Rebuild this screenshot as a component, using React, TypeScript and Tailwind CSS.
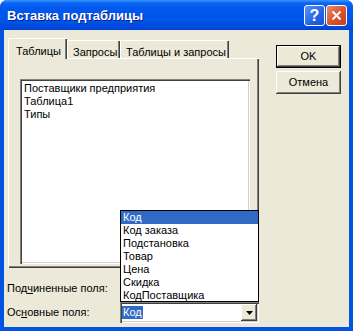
import React from "react";

const raised =
  "shadow-[inset_-1px_-1px_0_#404040,inset_1px_1px_0_#ffffff,inset_-2px_-2px_0_#808080,inset_2px_2px_0_#ECE9D8]";
const sunken =
  "shadow-[inset_1px_1px_0_#808080,inset_2px_2px_0_#404040,inset_-1px_-1px_0_#ffffff,inset_-2px_-2px_0_#D4D0C8]";

function Combo({ value, selected }: { value: string; selected?: boolean }) {
  return (
    <div className={`w-[139px] h-[21px] bg-white ${sunken} flex items-center pl-[2px] pr-[2px]`}>
      <div className="flex-1 flex items-center">
        <span className={`leading-[13px] px-[1px] ${selected ? "bg-[#316AC5] text-white" : ""}`}>{value}</span>
      </div>
      <div className={`w-[16px] h-[17px] bg-[#ECE9D8] ${raised} flex items-center justify-center`}>
        <svg width="7" height="4" viewBox="0 0 7 4">
          <path d="M0 0h7L3.5 4z" fill="#000" />
        </svg>
      </div>
    </div>
  );
}

export default function App() {
  const items = ["Код", "Код заказа", "Подстановка", "Товар", "Цена", "Скидка", "КодПоставщика"];
  return (
    <div className="w-[353px] h-[331px] bg-[#0054E3] flex flex-col rounded-t-[7px] overflow-hidden font-['Liberation_Sans',sans-serif] text-[11px] text-black">
      {/* title bar */}
      <div className="h-[30px] flex items-center pl-[7px] pr-[6px] bg-[linear-gradient(#3D95FF_0px,#0A66F4_3px,#0058EE_8px,#0055EA_20px,#0048DA_28px,#0040CF_30px)]">
        <span className="font-['Liberation_Sans',sans-serif] font-bold text-[13px] text-white [text-shadow:1px_1px_0_#0A1E8C] mt-[1px]">
          Вставка подтаблицы
        </span>
        <div className="ml-auto flex gap-[1px] mt-[1px]">
          <div className="w-[21px] h-[21px] rounded-[3px] border border-white bg-[linear-gradient(135deg,#5C95F7,#2362E6_60%,#1A4FD1)] flex items-center justify-center">
            <span className="font-['Liberation_Sans',sans-serif] font-bold text-[16px] leading-none text-white">?</span>
          </div>
          <div className="w-[21px] h-[21px] rounded-[3px] border border-white bg-[linear-gradient(135deg,#E88A6A,#D9532C_55%,#C4401A)] flex items-center justify-center">
            <svg width="11" height="11" viewBox="0 0 11 11">
              <path d="M1.5 1.5L9.5 9.5M9.5 1.5L1.5 9.5" stroke="#fff" strokeWidth="2" />
            </svg>
          </div>
        </div>
      </div>
      {/* body */}
      <div className="flex-1 ml-[4px] mr-[4px] mb-[4px] bg-[#ECE9D8] relative flex pl-[3px]">
        <div className="flex flex-col w-[252px]">
          {/* tabs */}
          <div className="ml-[1px] mt-[7px] flex items-end h-[21px]">
            <div className="w-[59px] h-[21px] -mb-[1px] relative z-10 bg-[#ECE9D8] border-l border-t border-white shadow-[inset_-1px_0_0_#404040,inset_-2px_0_0_#808080] flex items-start pt-[4px] pl-[7px]">
              Таблицы
            </div>
            <div className="w-[53px] h-[18px] bg-[#ECE9D8] border-l border-t border-white shadow-[inset_-1px_0_0_#404040,inset_-2px_0_0_#808080] flex items-start pt-[3px] pl-[5px]">
              Запросы
            </div>
            <div className="w-[109px] h-[18px] bg-[#ECE9D8] border-l border-t border-white shadow-[inset_-1px_0_0_#404040,inset_-2px_0_0_#808080] flex items-start pt-[3px] pl-[5px]">
              Таблицы и запросы
            </div>
          </div>
          {/* panel */}
          <div className="ml-[1px] w-[251px] h-[210px] border-l border-t border-white shadow-[inset_-1px_-1px_0_#404040,inset_-2px_-2px_0_#808080] pt-[20px] pl-[11px]">
            <div className={`w-[230px] h-[185px] bg-white ${sunken} pt-[3px] pl-[4px] flex flex-col`}>
              <div className="h-[13px] leading-[13px]">Поставщики предприятия</div>
              <div className="h-[13px] leading-[13px]">Таблица1</div>
              <div className="h-[13px] leading-[13px]">Типы</div>
            </div>
          </div>
          {/* fields */}
          <div className="mt-[10px] flex flex-col gap-[3px]">
            <div className="flex items-center h-[21px]">
              <div className="w-[113px]">
                Под<span className="underline">ч</span>иненные поля:
              </div>
              <Combo value="" />
            </div>
            <div className="flex items-center h-[21px]">
              <div className="w-[113px]">
                Ос<span className="underline">н</span>овные поля:
              </div>
              <Combo value="Код" selected />
            </div>
          </div>
        </div>
        {/* buttons */}
        <div className="ml-[17px] mt-[15px] flex flex-col gap-[3px]">
          <div className="w-[65px] h-[23px] border border-black bg-[#ECE9D8] shadow-[inset_-1px_-1px_0_#404040,inset_1px_1px_0_#ffffff,inset_-2px_-2px_0_#808080] flex items-center justify-center">
            OK
          </div>
          <div className={`w-[65px] h-[23px] bg-[#ECE9D8] ${raised} flex items-center justify-center`}>
            Отмена
          </div>
        </div>
        {/* dropdown list */}
        <div className="absolute left-[116px] top-[180px] w-[139px] h-[92px] bg-white border border-black flex flex-col">
          {items.map((it, i) => (
            <div
              key={it}
              className={`h-[13px] leading-[13px] pl-[2px] ${i === 0 ? "bg-[#316AC5] text-white" : ""}`}
            >
              {it}
            </div>
          ))}
        </div>
      </div>
    </div>
  );
}
